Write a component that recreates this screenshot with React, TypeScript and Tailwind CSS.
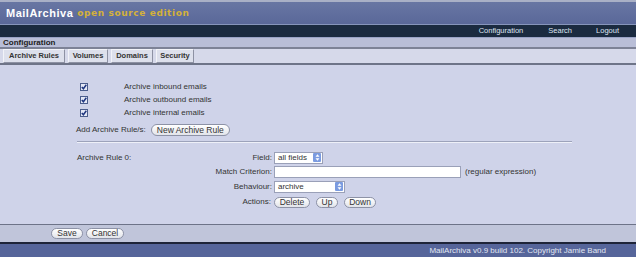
import React from 'react';

const font = { fontFamily: '"Liberation Sans", Arial, sans-serif' };

const Check = () => (
  <svg width="8" height="8" viewBox="0 0 8 8" className="block">
    <rect x="0.5" y="0.5" width="7" height="7" fill="#e4e8f6" stroke="#4b5d8c" />
    <path d="M1.8 4 L3.4 5.8 L6.3 1.8" stroke="#1f3680" strokeWidth="1.5" fill="none" />
  </svg>
);

const Pill = ({ children, className = '' }: { children: React.ReactNode; className?: string }) => (
  <span
    className={`inline-flex items-center justify-center h-[11px] rounded-[6px] border border-[#8d92a6] bg-gradient-to-b from-[#ffffff] to-[#e2e4ea] text-[8.5px] leading-none text-[#333] whitespace-nowrap ${className}`}
  >
    {children}
  </span>
);

const Spinner = () => (
  <span className="ml-auto mr-[1px] flex h-[9px] w-[8px] items-center justify-center rounded-[1px] bg-[#7b9be0]">
    <svg width="5" height="7" viewBox="0 0 5 7">
      <path d="M2.5 0.3 L4.5 2.8 H0.5 Z M2.5 6.7 L4.5 4.2 H0.5 Z" fill="#fff" />
    </svg>
  </span>
);

const Select = ({ value, w }: { value: string; w: string }) => (
  <span className={`flex items-center h-[12px] ${w} border border-[#9aa0b8] bg-white pl-[3px] text-[8px] leading-none text-[#333] whitespace-nowrap`}>
    {value}
    <Spinner />
  </span>
);

const tabs = [
  { t: 'Archive Rules', w: 'w-[62px]' },
  { t: 'Volumes', w: 'w-[40px]' },
  { t: 'Domains', w: 'w-[42px]' },
  { t: 'Security', w: 'w-[38px]' },
];

export default function App() {
  return (
    <div className="flex w-[640px] h-[259px] bg-white" style={font}>
      <div className="flex w-[636px] flex-col">
        {/* header */}
        <div className="flex h-[24px] items-center gap-[4px] border-t-2 border-[#a9b0c6] bg-gradient-to-b from-[#6876a3] to-[#5a6899] pl-[6px]">
          <span className="text-[11px] font-bold tracking-[0.5px] text-white">MailArchiva</span>
          <span className="pt-[2px] text-[9px] font-bold tracking-[0.6px] text-[#d4b13a]" style={{ fontFamily: '"DejaVu Sans", sans-serif' }}>
            open source edition
          </span>
        </div>
        <div className="flex h-[13px] items-center justify-end border-t border-[#8795bb] bg-[#1b2b40] pr-[17px] text-[7.5px] text-[#dfe5f2]">
          <span>Configuration</span>
          <span className="ml-[25px]">Search</span>
          <span className="ml-[24px]">Logout</span>
        </div>
        <div className="flex h-[10px] items-center border-t border-[#9aa3c6] bg-[#b9bed7] pl-[3px] text-[8px] font-bold leading-none text-[#222]">
          Configuration
        </div>
        <div className="h-[2px] bg-[#7d8296]" />
        <div className="flex h-[14px] items-center gap-[3px] bg-[#d6d9ea] pl-[3px]">
          {tabs.map((t) => (
            <span
              key={t.t}
              className={`flex h-[14px] ${t.w} items-center justify-center border border-[#f2f3f8] border-r-[#8d91a3] border-b-[#8d91a3] bg-[#dde0ec] text-[7.5px] font-bold leading-none text-[#333]`}
            >
              {t.t}
            </span>
          ))}
        </div>
        <div className="h-[2px] bg-[#6e7488]" />

        {/* content */}
        <div className="flex flex-1 flex-col bg-[#cfd3e9] pl-[77px] pt-[15px] text-[8px] leading-none text-[#333]">
          {['Archive inbound emails', 'Archive outbound emails', 'Archive internal emails'].map((l) => (
            <div key={l} className="flex h-[13px] items-center">
              <span className="ml-[3px] w-[44px]">
                <Check />
              </span>
              <span>{l}</span>
            </div>
          ))}
          <div className="mt-[5px] flex h-[12px] items-center">
            <span className="-ml-[1px]">Add Archive Rule/s:</span>
            <Pill className="ml-[5px] h-[12px] w-[79px]">New Archive Rule</Pill>
          </div>
          <div className="mt-[5px] h-[2px] w-[495px] border-t border-b border-t-[#9da3bb] border-b-[#eef0f8]" />

          <div className="mt-[8px] flex h-[13px] items-center">
            <div className="flex w-[197px] justify-between pr-[2px]">
              <span>Archive Rule 0:</span>
              <span>Field:</span>
            </div>
            <Select value="all fields" w="w-[49px]" />
          </div>
          <div className="mt-[1px] flex h-[13px] items-center">
            <div className="w-[197px] pr-[2px] text-right">Match Criterion:</div>
            <span className="h-[12px] w-[187px] border border-[#9aa0b8] bg-white" />
            <span className="ml-[4px]">(regular expression)</span>
          </div>
          <div className="mt-[2px] flex h-[13px] items-center">
            <div className="w-[197px] pr-[2px] text-right">Behaviour:</div>
            <Select value="archive" w="w-[71px]" />
          </div>
          <div className="mt-[3px] flex h-[12px] items-center">
            <div className="w-[197px] pr-[3px] text-right">Actions:</div>
            <Pill className="w-[36px]">Delete</Pill>
            <Pill className="ml-[6px] w-[22px]">Up</Pill>
            <Pill className="ml-[6px] w-[32px]">Down</Pill>
          </div>
        </div>

        {/* bottom */}
        <div className="flex h-[18px] items-center gap-[3px] border-t border-[#6d7388] bg-[#c0c5da] pl-[51px]">
          <Pill className="w-[32px]">Save</Pill>
          <Pill className="w-[38px]">Cancel</Pill>
        </div>
        <div className="flex h-[15px] items-center justify-end border-t-2 border-[#1e2438] bg-[#56659a] pr-[30px] text-[8px] text-[#e3e7f3]">
          MailArchiva v0.9 build 102. Copyright Jamie Band
        </div>
        <div className="h-[2px] bg-white" />
      </div>
    </div>
  );
}
